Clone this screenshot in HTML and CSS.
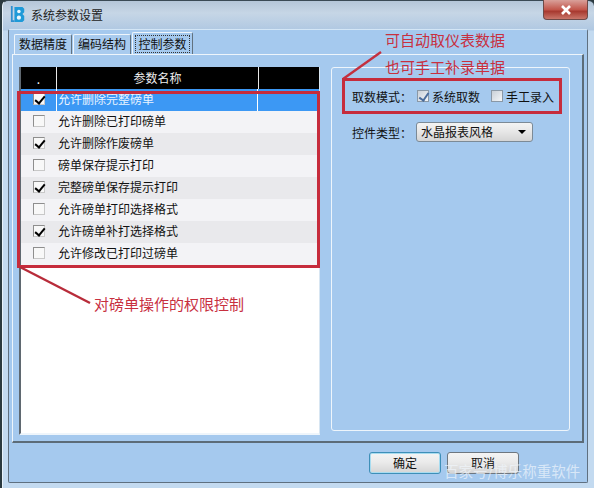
FILE: index.html
```html
<!DOCTYPE html>
<html lang="zh">
<head>
<meta charset="utf-8">
<title>系统参数设置</title>
<link rel="stylesheet" href="styles.css">
</head>
<body>
<div class="window">
  <div class="titlebar">
    <svg class="logo" width="16" height="18" viewBox="0 0 18 20">
      <path d="M2 0v17h3" fill="none" stroke="#2f8fd0" stroke-width="2"/>
      <path d="M5 1h9l2 2v4l-2 2 2 2v5l-2 2H5z" fill="#1e9ad8"/>
      <circle cx="10" cy="6" r="2" fill="#e8f6fc"/>
      <circle cx="10" cy="13" r="2.4" fill="#e8f6fc"/>
    </svg>
    <span class="title">系统参数设置</span>
    <div class="close"><svg width="12" height="10" viewBox="0 0 12 10"><path d="M2 1l8 8M10 1l-8 8" stroke="#fff" stroke-width="2.6"/></svg></div>
  </div>
  <div class="client">
    <div class="tabs">
      <div class="tab">数据精度</div>
      <div class="tab">编码结构</div>
      <div class="tab active"><span class="focus">控制参数</span></div>
    </div>
    <div class="panel">
      <div class="list">
        <div class="thead">
          <div class="c1">.</div>
          <div class="c2">参数名称</div>
          <div class="c3"></div>
        </div>
        <div class="row sel"><div class="c1"><span class="cb on"></span></div><div class="c2">允许删除完整磅单</div><div class="c3"></div></div>
        <div class="row"><div class="c1"><span class="cb"></span></div><div class="c2">允许删除已打印磅单</div><div class="c3"></div></div>
        <div class="row alt"><div class="c1"><span class="cb on"></span></div><div class="c2">允许删除作废磅单</div><div class="c3"></div></div>
        <div class="row"><div class="c1"><span class="cb"></span></div><div class="c2">磅单保存提示打印</div><div class="c3"></div></div>
        <div class="row alt"><div class="c1"><span class="cb on"></span></div><div class="c2">完整磅单保存提示打印</div><div class="c3"></div></div>
        <div class="row"><div class="c1"><span class="cb"></span></div><div class="c2">允许磅单打印选择格式</div><div class="c3"></div></div>
        <div class="row alt"><div class="c1"><span class="cb on"></span></div><div class="c2">允许磅单补打选择格式</div><div class="c3"></div></div>
        <div class="row"><div class="c1"><span class="cb"></span></div><div class="c2">允许修改已打印过磅单</div><div class="c3"></div></div>
      </div>
      <div class="settings">
        <div class="field mode">
          <span class="label">取数模式：</span>
          <span class="opt"><span class="cb2 on"></span>系统取数</span>
          <span class="opt"><span class="cb2"></span>手工录入</span>
        </div>
        <div class="field kind">
          <span class="label">控件类型：</span>
          <div class="select">水晶报表风格<span class="arrow"></span></div>
        </div>
      </div>
    </div>
    <div class="actions">
      <div class="btn default">确定</div>
      <div class="btn">取消</div>
    </div>
  </div>
</div>

<div class="box box-list"></div>
<div class="box box-mode"></div>
<svg class="lines" width="594" height="488" viewBox="0 0 594 488">
  <path d="M343 79L381 52" stroke="#c4303f" stroke-width="2.4" fill="none"/>
  <path d="M20 267L90 303" stroke="#b82c3a" stroke-width="2.4" fill="none"/>
</svg>
<div class="note n1">可自动取仪表数据</div>
<div class="note n2">也可手工补录单据</div>
<div class="note n3">对磅单操作的权限控制</div>
<div class="mark">百家号/博乐称重软件</div>
</body>
</html>
```
FILE: styles.css
```css
* { box-sizing: border-box; }
html, body { margin: 0; padding: 0; }
body {
  width: 594px; height: 488px; overflow: hidden; position: relative;
  font-family: "Noto Sans CJK SC", "Liberation Sans", sans-serif;
  font-size: 12px; color: #111; background: #2b3a3f;
}
.window {
  width: 592px; height: 488px; margin-left: 2px;
  display: flex; flex-direction: column;
  background: linear-gradient(#b4c6d8 0, #c6d6e6 12px, #b0c8e2 29px, #c3daf0 30px, #c3daf0 100%);
  border-left: 1px solid #e8f2fa; border-top: 1px solid #3a4a55; border-radius: 6px 6px 0 0;
  padding: 0 6px 5px 5px;
}
.titlebar { height: 28px; display: flex; align-items: center; position: relative; flex: none; }
.logo { margin: 0 5px 0 2px; }
.title { font-size: 12px; color: #222; margin-top: -1px; }
.close {
  position: absolute; right: 0; top: -1px; width: 45px; height: 20px;
  background: linear-gradient(#d9a09a, #c2574c 50%, #a83a30 60%, #c9766a);
  border: 1px solid #6d4a48; border-top: 0; border-radius: 0 0 4px 4px;
  display: flex; align-items: center; justify-content: center;
}
.client {
  flex: 1; background: #a5c9ee; border: 1px solid #5f7080; border-top: 1px solid #d4e6f6;
  padding: 2px 3px 0 3px; display: flex; flex-direction: column;
  border-radius: 2px;
}
.tabs { display: flex; height: 22px; padding-left: 2px; gap: 1px; flex: none; position: relative; z-index: 1; }
.tab {
  width: 58px; height: 20px; margin-top: 2px; text-align: center; line-height: 17px; font-size: 12px;
  border: 1px solid #eef5fb; border-right-color: #62727f; border-bottom: 0; border-radius: 2px 2px 0 0;
  background: #a9cbee;
}
.tab.active { width: 61px; height: 22px; margin-top: 0; padding: 2px; line-height: 15px; background: #a5c9ee; }
.focus { display: block; border: 1px dotted #333; height: 18px; }
.panel {
  height: 389px; flex: none; width: 572px; display: flex; gap: 11px; align-items: flex-start;
  border: 1px solid #eef5fb; border-right: 2px solid #5c6c78; border-bottom: 2px solid #5c6c78;
  padding: 12px 0 0 6px;
}
.list {
  width: 301px; height: 368px; flex: none; background: #fff;
  border-left: 2px solid #5f6870; border-bottom: 2px solid #eef5fb; border-right: 1px solid #d8e6f2;
}
.thead { height: 22px; display: flex; background: #000; color: #eee; font-size: 12px; line-height: 22px; }
.thead .c1 { border-right: 1px solid #e8e8e8; color: #fff; line-height: 24px; }
.thead .c2 { border-right: 1px solid #e8e8e8; text-align: center; padding-left: 0; }
.c1 { width: 36px; flex: none; text-align: center; }
.c2 { width: 202px; flex: none; padding-left: 1px; }
.c3 { flex: 1; }
.row { height: 22px; display: flex; align-items: flex-start; background: #f3f3f6; font-size: 12px; line-height: 20px; }
.row.alt { background: #e9e9ec; }
.row .c1, .row .c2 { height: 100%; }
.row .c1 { display: flex; align-items: center; justify-content: center; padding-bottom: 2px; }
.row.sel { background: #3c98f4; color: #eaf4ff; }
.row.sel .c2 { border-left: 1px solid #fff; border-right: 1px solid #fff; margin-left: -1px; padding-left: 1px; }
.cb {
  width: 12px; height: 12px; border: 1px solid #8e8e8e; background: #f8f8f8; display: block; position: relative;
  border-right-color: #c8c8c8; border-bottom-color: #c8c8c8;
}
.cb.on::after {
  content: ""; position: absolute; left: 3px; top: 0; width: 4px; height: 8px;
  border: solid #000; border-width: 0 2px 2px 0; transform: rotate(40deg);
}
.settings {
  width: 239px; height: 364px; flex: none; border: 1px solid #eef5fb; border-radius: 3px;
  padding: 16px 0 0 20px;
}
.field { display: flex; align-items: center; }
.mode { height: 24px; font-size: 12px; }
.mode .label { width: 65px; }
.opt { display: flex; align-items: center; margin-right: 11px; }
.cb2 {
  width: 12px; height: 12px; margin-right: 3px; border: 1px solid #8a98a6;
  background: linear-gradient(135deg, #c9d0d8, #f4f6f8); position: relative; display: block;
}
.cb2.on::after {
  content: ""; position: absolute; left: 3px; top: 0; width: 4px; height: 8px;
  border: solid #4a6c9c; border-width: 0 2px 2px 0; transform: rotate(35deg);
}
.kind { margin-top: 14px; }
.kind .label { width: 64px; }
.select {
  width: 117px; height: 20px; line-height: 18px; padding-left: 4px; position: relative;
  border: 1px solid #7c8a96; border-radius: 3px; font-size: 12px;
  background: linear-gradient(#f4f4f4, #e6e6e6 50%, #d4d4d4);
}
.arrow {
  position: absolute; right: 6px; top: 7px; width: 0; height: 0;
  border-left: 4px solid transparent; border-right: 4px solid transparent; border-top: 4px solid #000;
}
.actions { display: flex; gap: 6px; padding: 9px 0 0 357px; flex: none; }
.btn {
  width: 72px; height: 22px; line-height: 20px; text-align: center; font-size: 12px;
  border: 1px solid #6e7780; border-radius: 3px;
  background: linear-gradient(#f4f4f4, #ebebeb 45%, #d5d5d5);
}
.btn.default { border-color: #3e8fb8; box-shadow: inset 0 0 0 1px #a8dcf0; }
.box { position: absolute; border: 3px solid #c62c3c; }
.box-list { left: 17px; top: 91px; width: 303px; height: 177px; }
.box-mode { left: 342px; top: 78px; width: 220px; height: 36px; }
.lines { position: absolute; left: 0; top: 0; }
.note { position: absolute; color: #c8303f; font-size: 15px; white-space: nowrap; line-height: 18px; }
.n1 { left: 385px; top: 31px; }
.n2 { left: 385px; top: 58px; }
.n3 { left: 94px; top: 295px; }
.mark { position: absolute; left: 444px; top: 462px; color: rgba(240,246,252,.7); font-size: 14.5px; line-height: 18px; white-space: nowrap; }
```
